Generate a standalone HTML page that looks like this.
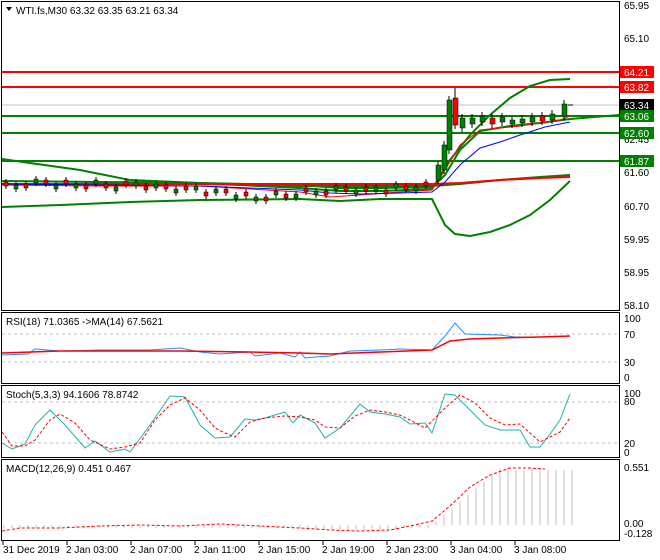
<!DOCTYPE html>
<html><head><meta charset="utf-8"><style>
body{margin:0;background:#fff;width:660px;height:560px;overflow:hidden;font-family:"Liberation Sans",sans-serif}
svg{position:absolute;left:0;top:0}
text{font-family:"Liberation Sans",sans-serif;font-size:10px;fill:#000}
</style></head><body>
<svg id="s" width="660" height="560" viewBox="0 0 660 560">
<rect width="660" height="560" fill="#fff"/>
<g fill="none" stroke="#000" stroke-width="1">
<rect x="1.5" y="1.5" width="618" height="309"/>
<rect x="1.5" y="312.5" width="618" height="71"/>
<rect x="1.5" y="385.5" width="618" height="72"/>
<rect x="1.5" y="459.5" width="618" height="81"/>
</g>
<line x1="2" y1="105" x2="619" y2="105" stroke="#c0c0c0"/>
<line x1="2" y1="72" x2="619" y2="72" stroke="#f00" stroke-width="2"/>
<line x1="2" y1="87" x2="619" y2="87" stroke="#f00" stroke-width="2"/>
<line x1="2" y1="116" x2="619" y2="116" stroke="#008000" stroke-width="2"/>
<line x1="2" y1="133" x2="619" y2="133" stroke="#008000" stroke-width="2"/>
<line x1="2" y1="161" x2="619" y2="161" stroke="#008000" stroke-width="2"/>
<g fill="none" stroke="#008000" stroke-width="2">
<polyline points="2,159 30,163 80,170 130,180 200,183 300,188 340,191 380,191 432,189 450,160 470,135 490,115 510,98 530,86 550,80 570,79"/>
<polyline points="2,207 60,205 130,202 200,200 300,199 340,201 380,199 432,199 445,225 455,234 470,236 490,232 510,225 530,215 550,200 570,181"/>
<polyline points="2,181 100,182 200,183 300,185 340,188 380,188 432,187 445,175 460,150 480,131 510,126 540,123 570,119 619,115"/>
<polyline points="2,184 200,184 300,186 432,186 460,184 500,180 540,177 570,175"/>
</g>
<polyline fill="none" stroke="#f00" stroke-width="2" points="2,184 200,184 300,184 432,184 460,183 500,180 540,178 570,177"/>
<polyline fill="none" stroke="#f00" stroke-width="1" points="2,185 100,186 200,186 300,192 330,197 360,195 400,192 432,190 445,170 460,145 480,130 520,126 560,120 570,116"/>
<polyline fill="none" stroke="#00f" stroke-width="1" points="2,184 100,185 200,186 300,190 330,193 360,194 400,193 432,192 445,182 460,165 480,148 500,142 520,135 545,127 570,122"/>
<g id="candles"></g>
<line x1="2" y1="334" x2="619" y2="334" stroke="#c0c0c0" stroke-dasharray="3,3"/>
<line x1="2" y1="362" x2="619" y2="362" stroke="#c0c0c0" stroke-dasharray="3,3"/>
<polyline fill="none" stroke="#1e90ff" points="2,355 28,354 35,349 60,351 100,350 150,350 180,348 200,352 220,354 250,352 255,356 280,353 295,357 300,352 305,358 315,357 330,356 350,351 380,350 400,349 432,350 445,336 455,323 465,334 500,335 515,337 545,337 570,336"/>
<polyline fill="none" stroke="#f00" stroke-width="1.5" points="2,353 60,351 100,351 180,351 250,352 300,353 330,354 380,352 432,350 450,341 470,339 500,338 540,337 570,336"/>
<line x1="2" y1="402" x2="619" y2="402" stroke="#c0c0c0" stroke-dasharray="3,3"/>
<line x1="2" y1="443" x2="619" y2="443" stroke="#c0c0c0" stroke-dasharray="3,3"/>
<polyline fill="none" stroke="#20b2aa" points="2,443 12,449 25,444 35,425 50,410 65,425 85,448 95,441 110,452 125,449 130,452 150,425 170,396 185,397 200,425 215,438 230,437 245,419 255,420 265,418 285,412 293,423 300,415 315,423 325,438 340,428 360,404 370,412 385,414 400,417 410,424 425,423 432,433 445,394 455,395 470,410 485,425 500,430 520,430 530,447 540,447 550,434 560,420 570,394"/>
<polyline fill="none" stroke="#f00" stroke-dasharray="3,2" points="2,432 12,446 25,446 35,440 50,420 60,414 75,423 90,440 110,449 125,447 140,443 155,420 170,405 185,398 200,410 215,428 225,433 235,437 250,422 265,418 285,416 300,417 315,420 325,427 340,428 355,416 370,410 385,412 400,415 410,420 425,428 445,408 460,395 475,403 490,418 505,425 520,424 530,433 540,442 560,432 570,418"/>
<g id="hist"></g>
<polyline fill="none" stroke="#f00" stroke-dasharray="3,2" points="2,531 20,528 60,528 100,526 140,525 180,526 220,524 260,526 300,528 330,530 360,531 390,530 410,526 432,521 450,506 470,487 490,475 510,468 530,468 545,469"/>
<g>
<text x="624" y="9">65.95</text>
<text x="624" y="42">65.10</text>
<text x="624" y="143">62.45</text>
<text x="624" y="176">61.60</text>
<text x="624" y="210">60.70</text>
<text x="624" y="243">59.95</text>
<text x="624" y="276">58.95</text>
<text x="624" y="309">58.10</text>
</g>
<rect x="620" y="66" width="34" height="12" fill="#f00"/><text x="624" y="76" style="fill:#fff">64.21</text>
<rect x="620" y="81" width="34" height="12" fill="#f00"/><text x="624" y="91" style="fill:#fff">63.82</text>
<rect x="620" y="99" width="34" height="12" fill="#000"/><text x="624" y="109" style="fill:#fff">63.34</text>
<rect x="620" y="110" width="34" height="12" fill="#008000"/><text x="624" y="120" style="fill:#fff">63.06</text>
<rect x="620" y="127" width="34" height="12" fill="#008000"/><text x="624" y="137" style="fill:#fff">62.60</text>
<rect x="620" y="155" width="34" height="12" fill="#008000"/><text x="624" y="165" style="fill:#fff">61.87</text>
<text x="624" y="322">100</text><text x="624" y="338">70</text><text x="624" y="366">30</text><text x="624" y="381">0</text>
<text x="624" y="397">100</text><text x="624" y="405">80</text><text x="624" y="447">20</text><text x="624" y="456">0</text>
<text x="624" y="471">0.551</text><text x="624" y="527">0.00</text><text x="624" y="537">-0.128</text>
<path d="M6,7 L12,7 L9,11 Z" fill="#000"/>
<text x="16" y="14">WTI.fs,M30  63.32 63.35 63.21 63.34</text>
<text x="6" y="325">RSI(18) 71.0365  -&gt;MA(14) 67.5621</text>
<text x="6" y="398">Stoch(5,3,3) 94.1606 78.8742</text>
<text x="6" y="472">MACD(12,26,9) 0.451 0.467</text>
<g stroke="#000"><line x1="3" y1="541" x2="3" y2="545"/><line x1="67" y1="541" x2="67" y2="545"/><line x1="131" y1="541" x2="131" y2="545"/><line x1="195" y1="541" x2="195" y2="545"/><line x1="259" y1="541" x2="259" y2="545"/><line x1="323" y1="541" x2="323" y2="545"/><line x1="387" y1="541" x2="387" y2="545"/><line x1="451" y1="541" x2="451" y2="545"/><line x1="515" y1="541" x2="515" y2="545"/></g>
<text x="3" y="553">31 Dec 2019</text><text x="66" y="553">2 Jan 03:00</text><text x="130" y="553">2 Jan 07:00</text><text x="194" y="553">2 Jan 11:00</text><text x="258" y="553">2 Jan 15:00</text><text x="322" y="553">2 Jan 19:00</text><text x="386" y="553">2 Jan 23:00</text><text x="450" y="553">3 Jan 04:00</text><text x="514" y="553">3 Jan 08:00</text>
</svg>
<script>
(function(){
var ns="http://www.w3.org/2000/svg";
function el(p,t,a){var e=document.createElementNS(ns,t);for(var k in a)e.setAttribute(k,a[k]);p.appendChild(e);}
var h=document.getElementById('hist');
for(var x=4;x<=572;x+=8){var ty;
 if(x<432){ty=(x>300&&x<400)?530:528;}
 else{var t=Math.min(1,(x-432)/70);ty=525-t*58; if(x>510)ty=470;}
 el(h,'line',{x1:x,y1:525,x2:x,y2:ty,stroke:'#c0c0c0'});
}
var c=document.getElementById('candles');
var base=[186,187,184,183,182,185,184,186,185,184,186,187,185,184,186,188,187,189,190,188,192,193,191,195,196,199,197,195,196,194,192,193,191,190,189,190,191,189,190,188,188,187,186];
for(var i=0;i<base.length;i++){var cx=4+i*10,y=base[i]+(i%3-1)*2;var up=i%2;
 el(c,'line',{x1:cx+2,y1:y-5,x2:cx+2,y2:y+5,stroke:'#000'});
 el(c,'rect',{x:cx,y:y-2,width:4,height:4,fill:up?'#008000':'#f00',stroke:'#000','stroke-width':0.5});}
var late=[[436,165,180,'#008000'],[442,145,170,'#008000'],[447,100,150,'#008000'],[453,98,125,'#f00'],[460,118,128,'#008000'],[470,118,124,'#008000'],[480,116,122,'#008000'],[490,118,124,'#f00'],[500,117,122,'#008000'],[510,120,124,'#008000'],[520,119,123,'#008000'],[530,117,122,'#008000'],[540,116,121,'#f00'],[550,114,120,'#008000'],[562,104,116,'#008000']];
late.forEach(function(d){el(c,'line',{x1:d[0]+2,y1:d[1]-4,x2:d[0]+2,y2:d[2]+4,stroke:'#000'});el(c,'rect',{x:d[0],y:d[1],width:5,height:d[2]-d[1],fill:d[3],stroke:'#000','stroke-width':0.5});});
el(c,'line',{x1:455,y1:88,x2:455,y2:98,stroke:'#000'});
el(c,'line',{x1:568,y1:105,x2:573,y2:105,stroke:'#000'});
})();
</script>
</body></html>
